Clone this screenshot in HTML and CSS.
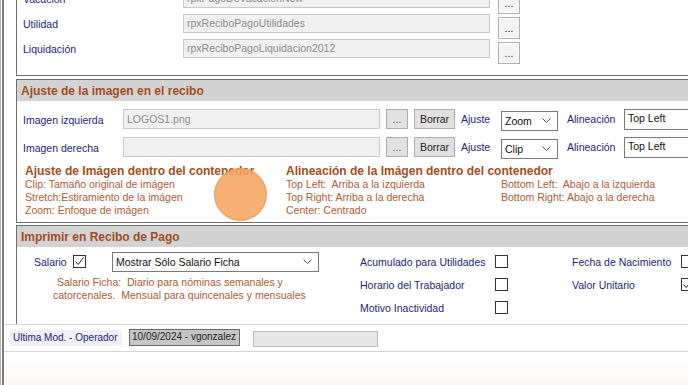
FILE: index.html
```html
<!DOCTYPE html>
<html lang="es">
<head>
  <meta charset="UTF-8">
  <title>Configuración de Recibo de Pago</title>
  <link rel="stylesheet" href="styles.css">
</head>
<body>

<div class="page">
  <div class="inner">

    <div class="scroll">

      <!-- Reportes por tipo de recibo -->
      <div class="panel reports">
        <div class="report-row">
          <span class="label">Vacación</span>
          <span class="textbox wide">rpxPagoDeVacacionNew</span>
          <button class="dots">...</button>
        </div>
        <div class="report-row">
          <span class="label">Utilidad</span>
          <span class="textbox wide">rpxReciboPagoUtilidades</span>
          <button class="dots">...</button>
        </div>
        <div class="report-row">
          <span class="label">Liquidación</span>
          <span class="textbox wide">rpxReciboPagoLiquidacion2012</span>
          <button class="dots">...</button>
        </div>
      </div>

      <!-- Ajuste de la imagen -->
      <div class="panel ajuste">
        <div class="panel-header">Ajuste de la imagen en el recibo</div>

        <div class="image-row">
          <span class="label img-label">Imagen izquierda</span>
          <span class="textbox img-box">LOGOS1.png</span>
          <button class="btn small">...</button>
          <button class="btn borrar">Borrar</button>
          <span class="label fit-label">Ajuste</span>
          <div class="select fit-select"><span>Zoom</span><svg width="9" height="6" viewBox="0 0 9 6"><path d="M0.5 0.5 L4.5 4.5 L8.5 0.5" fill="none" stroke="#555" stroke-width="1"/></svg></div>
          <span class="label align-label">Alineación</span>
          <span class="input align-box">Top Left</span>
        </div>

        <div class="image-row">
          <span class="label img-label">Imagen derecha</span>
          <span class="textbox img-box"></span>
          <button class="btn small">...</button>
          <button class="btn borrar">Borrar</button>
          <span class="label fit-label">Ajuste</span>
          <div class="select fit-select"><span>Clip</span><svg width="9" height="6" viewBox="0 0 9 6"><path d="M0.5 0.5 L4.5 4.5 L8.5 0.5" fill="none" stroke="#555" stroke-width="1"/></svg></div>
          <span class="label align-label">Alineación</span>
          <span class="input align-box">Top Left</span>
        </div>

        <div class="info">
          <div class="info-col first">
            <div class="info-title">Ajuste de Imágen dentro del contenedor</div>
            <div>Clip: Tamaño original de imágen</div>
            <div>Stretch:Estiramiento de la imágen</div>
            <div>Zoom: Enfoque de imágen</div>
          </div>
          <div class="info-col">
            <div class="info-title">Alineación de la Imágen dentro del contenedor</div>
            <div class="info-grid">
              <div>Top Left:&nbsp; Arriba a la izquierda</div>
              <div>Bottom Left:&nbsp; Abajo a la izquierda</div>
              <div>Top Right: Arriba a la derecha</div>
              <div>Bottom Right: Abajo a la derecha</div>
              <div>Center: Centrado</div>
            </div>
          </div>
        </div>
      </div>

      <!-- Imprimir en recibo -->
      <div class="panel imprimir">
        <div class="panel-header">Imprimir en Recibo de Pago</div>
        <div class="print-body">
          <div class="print-col left">
            <div class="print-row">
              <span class="label salario-label">Salario</span>
              <span class="check checked"><svg width="11" height="11" viewBox="0 0 11 11"><path d="M1.5 5.5 L4.2 8.5 L9.5 1.5" fill="none" stroke="#222" stroke-width="1"/></svg></span>
              <div class="select salario-select"><span>Mostrar Sólo Salario Ficha</span><svg width="9" height="6" viewBox="0 0 9 6"><path d="M0.5 0.5 L4.5 4.5 L8.5 0.5" fill="none" stroke="#555" stroke-width="1"/></svg></div>
            </div>
            <div class="note">
              <div class="note-first">Salario Ficha:&nbsp; Diario para nóminas semanales y</div>
              <div>catorcenales.&nbsp; Mensual para quincenales y mensuales</div>
            </div>
          </div>
          <div class="print-col middle">
            <div class="print-row"><span class="label opt-label">Acumulado para Utilidades</span><span class="check"></span></div>
            <div class="print-row"><span class="label opt-label">Horario del Trabajador</span><span class="check"></span></div>
            <div class="print-row"><span class="label opt-label">Motivo Inactividad</span><span class="check"></span></div>
          </div>
          <div class="print-col right">
            <div class="print-row"><span class="label opt-label narrow">Fecha de Nacimiento</span><span class="check"></span></div>
            <div class="print-row"><span class="label opt-label narrow">Valor Unitario</span><span class="check checked"><svg width="11" height="11" viewBox="0 0 11 11"><path d="M1.5 5.5 L4.2 8.5 L9.5 1.5" fill="none" stroke="#222" stroke-width="1"/></svg></span></div>
          </div>
        </div>
      </div>

    </div>

    <div class="footer">
      <span class="footer-label">Ultima Mod. - Operador</span>
      <span class="footer-value">10/09/2024 - vgonzalez</span>
      <span class="footer-empty"></span>
    </div>

  </div>

  <!-- indicador de clic -->
  <span class="click-dot"></span>
</div>

</body>
</html>
```

FILE: styles.css
```css
body {
  margin: 0;
  padding: 0;
  font-family: "Liberation Sans", Arial, sans-serif;
  font-size: 10.5px;
  background-color: #fff;
  overflow: hidden;
  height: 385px;
}

.page {
  position: relative;
  height: 385px;
  border-left: 1px solid #b4b4b4;
  padding-left: 1px;
  background: linear-gradient(to bottom, #fff 92%, #fcf8f5);
}

.inner {
  border-left: 2px solid #7c7c7c;
  height: 385px;
}

.scroll {
  height: 324px;
  overflow: hidden;
}

.label {
  color: #23237a;
  white-space: nowrap;
}

/* paneles */

.panel {
  margin-left: 12px;
  width: 740px;
  border: 1px solid #6e6e6e;
  border-right: none;
  box-sizing: border-box;
}

.panel-header {
  height: 21px;
  line-height: 22px;
  background-color: #d3d3d3;
  color: #a24d22;
  font-weight: bold;
  font-size: 12px;
  padding-left: 4px;
}

.reports {
  margin-top: -18px;
  padding: 6px 0 11px 6px;
}

.report-row {
  display: flex;
  align-items: flex-start;
  height: 25px;
}

.report-row .label {
  width: 160px;
  line-height: 20px;
}

.textbox {
  display: block;
  height: 19px;
  box-sizing: border-box;
  background-color: #f0f0f0;
  border: 1px solid #c9c9c9;
  color: #8c8c8c;
  padding-left: 3px;
  line-height: 17px;
  white-space: nowrap;
}

.textbox.wide {
  width: 307px;
}

button {
  font-family: inherit;
  font-size: 10.5px;
  color: #222;
  padding: 0;
  cursor: pointer;
}

.dots {
  width: 22px;
  height: 22px;
  margin: 3px 0 0 8px;
  background-color: #f3f3f3;
  border: 1px solid #adadad;
  box-shadow: inset 0 0 0 1px #fff;
  line-height: 14px;
}

/* ajuste de imagen */

.ajuste {
  margin-top: 3px;
  padding-bottom: 5px;
}

.image-row {
  display: flex;
  align-items: center;
  height: 20px;
  padding-left: 6px;
  margin-top: 8px;
}

.img-label {
  width: 100px;
  padding-top: 2px;
}

.img-box {
  width: 257px;
  height: 20px;
  line-height: 18px;
}

.btn {
  height: 20px;
  background-color: #e1e1e1;
  border: 1px solid #adadad;
  margin-left: 6px;
}

.btn.small {
  width: 22px;
  color: #555;
  line-height: 12px;
}

.btn.borrar {
  width: 41px;
}

.fit-label {
  width: 40px;
  margin-left: 6px;
}

.select {
  display: flex;
  align-items: center;
  justify-content: space-between;
  height: 20px;
  box-sizing: border-box;
  background-color: #fff;
  border: 1px solid #7a7a7a;
  padding: 0 6px 0 3px;
  color: #111;
  white-space: nowrap;
}

.fit-select {
  width: 57px;
  margin-top: 3px;
}

.align-label {
  width: 57px;
  margin-left: 9px;
}

.input {
  display: block;
  width: 80px;
  height: 21px;
  box-sizing: border-box;
  background-color: #fff;
  border: 1px solid #7a7a7a;
  padding-left: 3px;
  line-height: 17px;
  color: #111;
}

.info {
  display: flex;
  margin-top: 8px;
  padding-left: 8px;
  color: #ab5c34;
  line-height: 13px;
}

.info-title {
  font-weight: bold;
  font-size: 12px;
  color: #a24d22;
}

.info-col.first {
  width: 261px;
}

.info-grid {
  display: grid;
  grid-template-columns: 215px auto;
}

/* imprimir */

.imprimir {
  margin-top: 2px;
  height: 110px;
}

.print-body {
  display: flex;
  padding-top: 3px;
}

.print-row {
  display: flex;
  align-items: center;
  height: 23px;
}

.print-col.left {
  width: 343px;
  padding-left: 17px;
  box-sizing: border-box;
}

.print-col.middle {
  width: 212px;
}

.salario-label {
  width: 39px;
}

.check {
  display: flex;
  align-items: center;
  justify-content: center;
  width: 13px;
  height: 13px;
  box-sizing: border-box;
  border: 1px solid #333;
  background-color: #fff;
}

.salario-select {
  width: 207px;
  margin-left: 26px;
}

.note {
  color: #ab5c34;
  line-height: 13px;
  margin: 3px 0 0 19px;
}

.note-first {
  padding-left: 4px;
}

.opt-label {
  width: 135px;
}

.opt-label.narrow {
  width: 109px;
}

/* pie */

.footer {
  display: flex;
  align-items: center;
  height: 26px;
  border-top: 1px solid #d4d4d4;
  border-bottom: 1px solid #d4d4d4;
  padding-left: 6px;
  white-space: nowrap;
  font-size: 10px;
}

.footer-label {
  width: 109px;
  height: 16px;
  line-height: 16px;
  padding-left: 3px;
  background-color: #f1f1f5;
  color: #23237a;
}

.footer-value {
  width: 111px;
  height: 17px;
  box-sizing: border-box;
  margin-left: 7px;
  background-color: #c6c6c6;
  border: 1px solid #686868;
  padding-left: 2px;
  line-height: 14px;
  color: #222;
  margin-top: -1px;
}

.footer-empty {
  width: 125px;
  height: 16px;
  box-sizing: border-box;
  margin-left: 13px;
  background-color: #e6e6e6;
  border: 1px solid #b8b8b8;
  margin-top: 2px;
}

.click-dot {
  position: absolute;
  left: 213px;
  top: 168px;
  width: 53px;
  height: 53px;
  border-radius: 50%;
  background-color: rgba(247, 164, 96, 0.88);
  border: 1px solid #ef9a55;
  box-sizing: border-box;
}
```
